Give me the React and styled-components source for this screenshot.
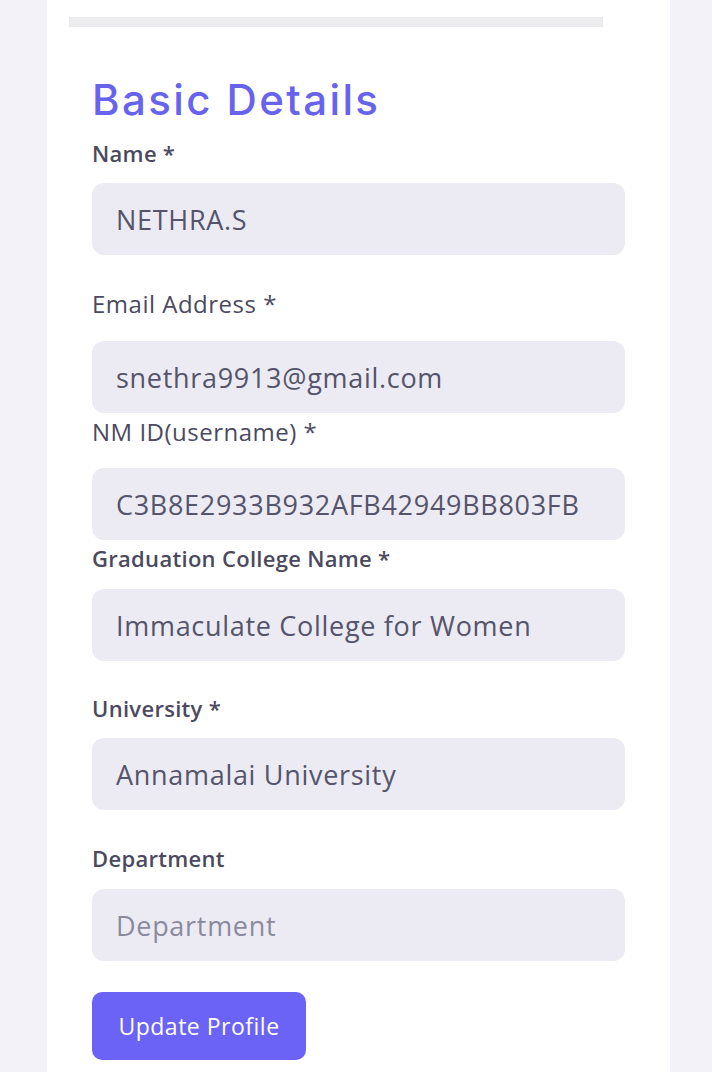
import React from 'react';
import styled, { createGlobalStyle } from 'styled-components';

const GlobalStyle = createGlobalStyle`
	body {
		margin: 0;
		background: #f3f2f9;
		font-family: 'Open Sans', 'Lato', sans-serif;
	}
`;

const fields = [
	{ label: 'Name *', value: 'NETHRA.S', bold: true, top: 13, gap: 15 },
	{ label: 'Email Address *', value: 'snethra9913@gmail.com', top: 34, gap: 22 },
	{ label: 'NM ID(username) *', value: 'C3B8E2933B932AFB42949BB803FB', top: 4, gap: 21 },
	{ label: 'Graduation College Name *', value: 'Immaculate College for Women', bold: true, top: 3, gap: 16 },
	{ label: 'University *', value: 'Annamalai University', bold: true, top: 32, gap: 15 },
	{ label: 'Department', placeholder: 'Department', bold: true, top: 33, gap: 16 },
];

const App = () => {
	return (
		<>
			<GlobalStyle />
			<Page>
				<Card>
					<TopBar />
					<Title>Basic Details</Title>
					<Form onSubmit={(e) => e.preventDefault()}>
						{fields.map((f) => (
							<Field key={f.label} $top={f.top}>
								<Label $bold={f.bold} $gap={f.gap}>
									{f.label}
								</Label>
								<Input
									defaultValue={f.value}
									placeholder={f.placeholder}
									readOnly={!!f.value}
								/>
							</Field>
						))}
						<Button type='submit'>Update Profile</Button>
					</Form>
				</Card>
			</Page>
		</>
	);
};

export default App;

const Page = styled.div`
	min-height: 1072px;
	padding: 0 42px 0 47px;
	display: flex;
`;

const Card = styled.div`
	flex: 1;
	background: #ffffff;
	padding: 17px 45px 40px 45px;
	box-sizing: border-box;
	min-height: 1072px;
`;

const TopBar = styled.div`
	height: 10px;
	background: #ececef;
	margin: 0 22px 0 -23px;
`;

const Title = styled.h1`
	margin: 48px 0 0 0;
	font-family: 'Inter', 'Noto Sans', sans-serif;
	font-weight: 500;
	font-size: 42px;
	line-height: 50px;
	color: #6763ee;
	letter-spacing: 2.4px;
`;

const Form = styled.form`
	display: flex;
	flex-direction: column;
	align-items: flex-start;
`;

const Field = styled.div`
	display: flex;
	flex-direction: column;
	width: 100%;
	margin-top: ${(p) => p.$top}px;
`;

const Label = styled.label`
	font-size: ${(p) => (p.$bold ? 22 : 24)}px;
	letter-spacing: ${(p) => (p.$bold ? 0.3 : 0.5)}px;
	line-height: 30px;
	color: #4b4a5f;
	font-weight: ${(p) => (p.$bold ? 600 : 400)};
	margin-bottom: ${(p) => p.$gap}px;
`;

const Input = styled.input`
	height: 72px;
	width: 100%;
	box-sizing: border-box;
	border: none;
	outline: none;
	border-radius: 12px;
	background: #ecebf4;
	padding: 0 24px;
	font-family: 'Open Sans', 'Lato', sans-serif;
	font-size: 27px;
	letter-spacing: 0.7px;
	color: #55546a;

	&::placeholder {
		color: #8b8a9d;
	}
`;

const Button = styled.button`
	margin-top: 31px;
	height: 68px;
	width: 214px;
	border: none;
	border-radius: 10px;
	background: #6b63f5;
	color: #ffffff;
	font-family: 'Open Sans', 'Lato', sans-serif;
	font-size: 23px;
	letter-spacing: 0.5px;
	cursor: pointer;
`;
